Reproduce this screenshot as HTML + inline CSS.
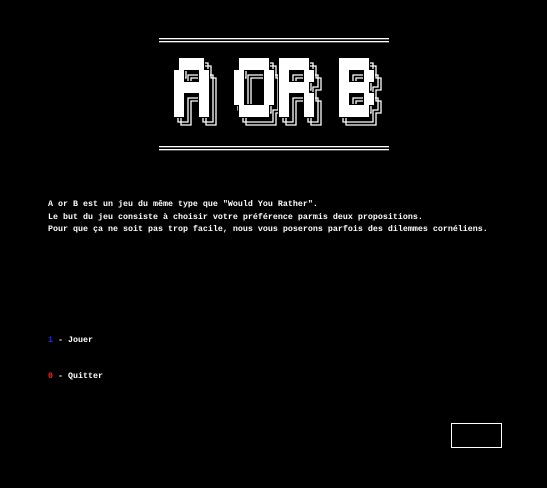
<!DOCTYPE html>
<html><head><meta charset="utf-8"><style>
html,body{margin:0;padding:0;background:#000;width:547px;height:488px;overflow:hidden;position:relative}
.t{position:absolute;left:48px;color:#fff;font-family:"Liberation Mono",monospace;font-size:8.33px;font-weight:bold;line-height:12.5px;white-space:pre}
.box{position:absolute;left:451px;top:423px;width:49px;height:23px;border:1px solid #fff}
svg{position:absolute;left:0;top:0}
</style></head><body>
<svg width="547" height="488">
<g fill="#fff">
<rect x="159" y="38" width="230" height="1.3"/><rect x="159" y="41" width="230" height="1.3"/>
<rect x="159" y="146" width="230" height="1.3"/><rect x="159" y="149" width="230" height="1.3"/>
</g>
<g fill="none" stroke="#fff" stroke-width="1.3">
<path transform="translate(7,8)" d="M179,58H204V70H209V117H199V93H184V117H174V70H179Z M184,70H199V82H184Z M239,58H269V70H274V105H269V117H239V105H234V70H239Z M244,70H264V105H244Z M279,58H309V70H314V82H309V93H314V117H304V93H289V117H279Z M289,70H304V82H289Z M339,58H369V70H374V82H369V93H374V105H369V117H339Z M349,70H364V82H349Z M349,93H364V105H349Z"/>
<path transform="translate(4,5)" d="M179,58H204V70H209V117H199V93H184V117H174V70H179Z M184,70H199V82H184Z M239,58H269V70H274V105H269V117H239V105H234V70H239Z M244,70H264V105H244Z M279,58H309V70H314V82H309V93H314V117H304V93H289V117H279Z M289,70H304V82H289Z M339,58H369V70H374V82H369V93H374V105H369V117H339Z M349,70H364V82H349Z M349,93H364V105H349Z"/>
</g>
<path fill="#fff" fill-rule="evenodd" stroke="#000" stroke-width="2" paint-order="stroke" d="M179,58H204V70H209V117H199V93H184V117H174V70H179Z M184,70H199V82H184Z M239,58H269V70H274V105H269V117H239V105H234V70H239Z M244,70H264V105H244Z M279,58H309V70H314V82H309V93H314V117H304V93H289V117H279Z M289,70H304V82H289Z M339,58H369V70H374V82H369V93H374V105H369V117H339Z M349,70H364V82H349Z M349,93H364V105H349Z"/>
</svg>
<div class="t" style="top:198px">A or B est un jeu du même type que "Would You Rather".
Le but du jeu consiste à choisir votre préférence parmis deux propositions.
Pour que ça ne soit pas trop facile, nous vous poserons parfois des dilemmes cornéliens.</div>
<div class="t" style="top:334px"><span style="color:#1a2dff">1</span> - Jouer</div>
<div class="t" style="top:370px"><span style="color:#ff2020">0</span> - Quitter</div>
<div class="box"></div>
</body></html>
